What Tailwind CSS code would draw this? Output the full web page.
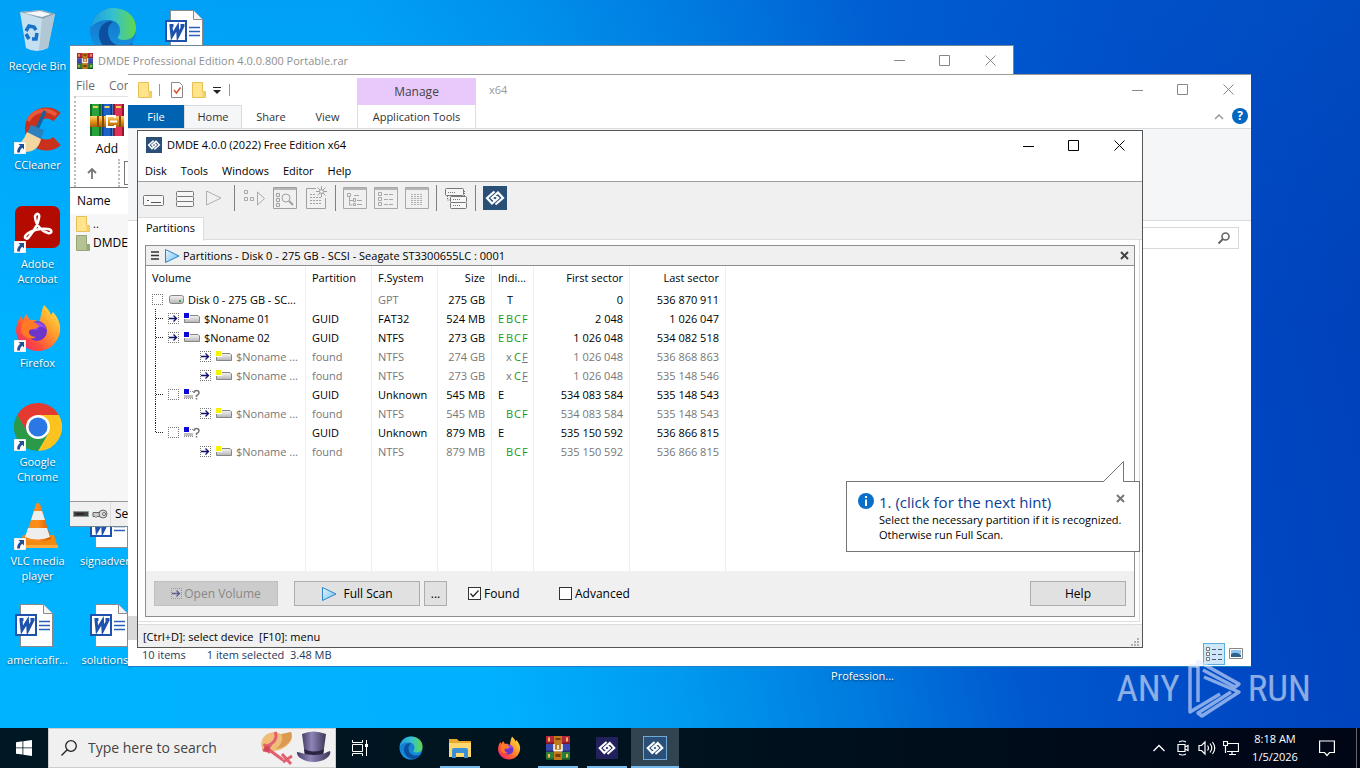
<!DOCTYPE html>
<html lang="en">
<head>
  <meta charset="UTF-8" />
  <title>DMDE 4.0.0 (2022) Free Edition x64</title>
  <meta name="viewport" content="width=device-width, initial-scale=1.0">
  <script src="https://cdn.jsdelivr.net/npm/@tailwindcss/browser@4"></script>
</head>
<body class="h-screen overflow-hidden font-['Open_Sans','Noto_Sans',sans-serif] text-[11px] leading-4 text-black">

<!-- shared icons -->
<svg class="absolute size-0" aria-hidden="true">
  <defs>
    <linearGradient id="edgeTop" x1="0" y1="0" x2="1" y2="0"><stop offset="0" stop-color="#1b9de2"/><stop offset=".5" stop-color="#35c1d0"/><stop offset="1" stop-color="#62d848"/></linearGradient>
    <linearGradient id="edgeBody" x1="0" y1="0" x2="0" y2="1"><stop offset="0" stop-color="#1470c4"/><stop offset="1" stop-color="#1595e4"/></linearGradient>
    <linearGradient id="fox" x1="1" y1="0" x2="0" y2="1"><stop offset="0" stop-color="#fff14a"/><stop offset=".4" stop-color="#ff9a2b"/><stop offset=".7" stop-color="#ff4b3c"/><stop offset="1" stop-color="#e3208a"/></linearGradient>
    <linearGradient id="play" x1="0" y1="0" x2="1" y2="1"><stop offset="0" stop-color="#e4f5ff"/><stop offset="1" stop-color="#6fc0f2"/></linearGradient>
    <linearGradient id="cone" x1="0" y1="0" x2="1" y2="0"><stop offset="0" stop-color="#f08a1c"/><stop offset=".5" stop-color="#ff8c1a"/><stop offset="1" stop-color="#d05a00"/></linearGradient>
    <linearGradient id="gold" x1="0" y1="0" x2="0" y2="1"><stop offset="0" stop-color="#ffd877"/><stop offset=".5" stop-color="#e39317"/><stop offset="1" stop-color="#a85f08"/></linearGradient>
    <linearGradient id="hat" x1="0" y1="0" x2="1" y2="0"><stop offset="0" stop-color="#453d63"/><stop offset=".4" stop-color="#8f84b8"/><stop offset="1" stop-color="#3f3757"/></linearGradient>
    <linearGradient id="metal" x1="0" y1="0" x2="0" y2="1"><stop offset="0" stop-color="#f6f6f6"/><stop offset="1" stop-color="#b4b4b4"/></linearGradient>
  </defs>
  <symbol id="shortcut" viewBox="0 0 12 12"><path fill="#fff" stroke="#bbb" stroke-width=".5" d="M0 0h12v12H0z"/><path fill="#234f93" d="M4.500 2H10v5.500L8.300 5.800C6.500 7 6 8.500 6 10.500H3.200C3 7.500 4 5.500 6.200 3.700z"/></symbol>
  <symbol id="word" viewBox="0 0 48 48">
    <path fill="#fff" stroke="#8a8a8a" d="M8.500 3.500h23l9 9v33h-32z"/><path fill="#f4f4f4" stroke="#8a8a8a" d="M31.500 3.500v9h9"/>
    <path stroke="#2b5fb8" stroke-width="1.500" d="M27 20.500h11M27 24.500h11M27 28.500h11"/>
    <path fill="#fff" stroke="#1f52ad" stroke-width="2" d="M4 14h20v20H4z"/>
    <path fill="none" stroke="#1f52ad" stroke-width="3" d="M7.500 18.500h4M9 19l1 10 5.500-9 .5 9L21 19M18.500 18.500h4"/>
  </symbol>
  <symbol id="edge" viewBox="0 0 48 48">
    <circle cx="24" cy="24" r="23" fill="url(#edgeBody)"/>
    <path fill="#0c4f9e" d="M21 14c-8 2-12 8-11 16 2 10 10 16 19 16 7-1 12-5 15-10-4 3-8 3-12 3-9-1-13-8-13-14 0-4 1-8 5-10z"/>
    <path fill="url(#edgeTop)" d="M1.500 21C3 9 13 1 24 1c14 0 23 9 23 20 0 8-5 12-12 12-4 0-7-1-6-3 1-2 2-3 2-7 0-6-5-10-12-10-8 0-14 3-17.500 8z"/>
  </symbol>
  <symbol id="firefox" viewBox="0 0 48 48">
    <path fill="url(#fox)" d="M30 1c3 3 6 6 7 10l2-3c6 7 8 13 7 20-2 11-11 19-22 19S3 39 2 27c0-6 2-11 5-15l2 4 3-6 4 6c4-1 7 0 9 3 2-6 2-12 5-18z"/>
    <circle cx="23" cy="27" r="10" fill="#6d35c9"/><path fill="#9a4ff0" d="M15 21c5-5 15-3 17 4-5-4-8-2-9 1-3 0-7-1-8-5z"/>
    <path fill="#ff7a24" d="M9 17c6-2 11 0 16 5-3 4-8 2-10 5-1 3 3 6 7 6-6 4-15 0-15-8z"/>
  </symbol>
  <symbol id="chrome" viewBox="0 0 48 48">
    <path fill="#e53a2f" d="M3.200 12a24 24 0 0 1 41.600 0H24L13.600 30z"/><path fill="#fcc31e" d="M44.800 12A24 24 0 0 1 24 48l10.400-18L24 12z"/><path fill="#2a9a48" d="M24 48A24 24 0 0 1 3.200 12L13.600 30 24 36l10.400-6z"/>
    <circle cx="24" cy="24" r="12" fill="#fff"/><circle cx="24" cy="24" r="9.500" fill="#2b78e4"/>
  </symbol>
  <symbol id="links" viewBox="0 0 24 24">
    <path fill="none" stroke="#fff" stroke-width="2.200" d="M11.500 5.500 4 12l5 5.500 6.200-5.500-2.700-2.500M12.500 18.500 20 12l-5-5.500L8.800 12l2.700 2.500"/>
  </symbol>
  <symbol id="dmde" viewBox="0 0 24 24"><path fill="#2a5078" d="M0 0h24v24H0z"/><use href="#links" width="24" height="24"/></symbol>
  <symbol id="folder" viewBox="0 0 14 16"><path fill="#ffe48c" stroke="#e6bf55" d="M.5.500h10v9h3v6H.5z"/><path fill="#f3d06b" d="M10.500 9.500h3v6h-3z"/></symbol>
  <symbol id="books" viewBox="0 0 34 34">
    <path fill="#27a23c" d="M0 1h11v32H0z"/><path fill="#1d62c9" d="M11.500 1h11v32h-11z"/><path fill="#dd3157" d="M23 1h11v32H23z"/>
    <path fill="#156b25" d="M0 1h2v32H0zM9 1h2v32H9z"/><path fill="#0e3b88" d="M11.500 1h2v32h-2zM20.500 1h2v32h-2z"/><path fill="#95152f" d="M23 1h2v32h-2zM32 1h2v32h-2z"/>
    <path fill="#f2d44c" d="M3 3h5v2H3zM14.500 3h5v2h-5zM26 3h5v2h-5z"/>
    <path fill="url(#gold)" d="M0 13h34v11H0z"/><path fill="#8c4a00" d="M7 13h2v11H7zM12 13h2v11h-2zM29 13h2v11h-2z"/><path fill="none" stroke="#fff" stroke-width="2" d="M25 15v-2h-8v11h8v-2M20 18.500h7"/>
  </symbol>
  <symbol id="rar" viewBox="0 0 24 24">
    <path fill="#b8243f" d="M0 0h24v8H0z"/><path fill="#3a4aae" d="M0 8h24v8H0z"/><path fill="#2c7f3a" d="M0 16h24v8H0z"/>
    <path fill="#000" opacity=".35" d="M0 6.500h24V8H0zM0 14.500h24V16H0zM0 22.500h24V24H0z"/><path fill="#eec24d" d="M2 1.500h2v4H2zM20 1.500h2v4h-2zM2 18h2v3.500H2zM20 18h2v3.500h-2z"/>
    <path fill="#c07a1b" d="M8 0h8v24H8z"/><path fill="#7a3d05" d="M9.500 2h5v2h-5zM9.500 18h5v3h-5z"/><path fill="none" stroke="#fff" stroke-width="1.500" d="M8 8v6.500h8V8M12 9v4"/>
  </symbol>
  <symbol id="drive" viewBox="0 0 16 11"><rect x=".5" y="1.500" width="14" height="8" rx="2" fill="url(#metal)" stroke="#858585"/><path fill="#2fae3a" d="M10 6h2v2h-2z"/></symbol>
  <symbol id="vol-blue" viewBox="0 0 16 11"><path fill="url(#metal)" stroke="#858585" d="M2 2.500h12l1.500 1.500v5.500h-15V4z"/><path fill="#fff" d="M0 0h6v6H0z"/><path fill="#0a08d8" d="M0 0h5v5H0z"/></symbol>
  <symbol id="vol-yellow" viewBox="0 0 16 11"><path fill="url(#metal)" stroke="#858585" d="M2 2.500h12l1.500 1.500v5.500h-15V4z"/><path fill="#fff" d="M0 0h6v6H0z"/><path fill="#f4f400" d="M0 0h5v5H0z"/></symbol>
  <symbol id="vol-unknown" viewBox="0 0 16 11"><path fill="#bdbdbd" d="M0 6h9v3H0z"/><path fill="#0a08d8" d="M0 0h5v5H0z"/><path stroke="#888" stroke-dasharray="1 1" d="M6 2.500h3M0 9.500h9"/><path fill="none" stroke="#777" stroke-width="1.500" d="M10 4q0-2.500 2.500-2.500T15 4q0 1.500-2.500 2.500V8M12.500 9v1.500"/></symbol>
  <symbol id="box" viewBox="0 0 11 11"><path fill="none" stroke="#777" stroke-dasharray="1 1" d="M0 .5h11M0 10.500h11M.5 2v7M10.500 2v7"/></symbol>
  <symbol id="open" viewBox="0 0 11 11"><path fill="none" stroke="#777" stroke-dasharray="1 1" d="M0 .5h11M0 10.500h11M.5 2v7M10.500 2v7"/><path fill="none" stroke="#13106b" stroke-width="1.300" d="M1 5.500h7.500M5.500 2.500l3 3-3 3"/></symbol>
  <symbol id="tree-mid" viewBox="0 0 16 19"><path fill="none" stroke="#222" stroke-dasharray="1 1" d="M3.500 0v19M4 9.500h8"/></symbol>
  <symbol id="tree-pass" viewBox="0 0 16 19"><path fill="none" stroke="#222" stroke-dasharray="1 1" d="M3.500 0v19"/></symbol>
  <symbol id="tree-end" viewBox="0 0 16 19"><path fill="none" stroke="#222" stroke-dasharray="1 1" d="M3.500 0v9.500M4 9.500h8"/></symbol>
  <symbol id="tri" viewBox="0 0 16 16"><path fill="url(#play)" stroke="#2f83c7" d="M1.500 1.500v13L15 8z"/></symbol>
</svg>

<div class="flex h-screen flex-col">
<main class="relative flex-1 overflow-hidden bg-[linear-gradient(180deg,rgba(0,110,220,.25)_0%,rgba(0,110,220,0)_45%),linear-gradient(78deg,#00b3ff_0%,#00b1ff_33%,#009bf0_45%,#0078dd_58%,#0058cf_68%,#0048c4_83%,#003fb6_100%)]">

  <!-- desktop icons -->
  <div class="grid grid-cols-[repeat(12,75px)] auto-rows-[99px] pt-[7px] text-center leading-[15px] text-white [text-shadow:0_1px_2px_rgba(0,0,0,.55)]">
    <a href="#" class="col-start-1 row-start-1 flex flex-col items-center gap-[3px]">
      <svg class="size-12" viewBox="0 0 48 48"><path fill="#d9e6ee" opacity=".9" d="m6 5 6 36q10 6 22 0l7-34-14-4z"/><path fill="#a9bcc8" opacity=".7" d="m28 13 13-6-7 34-9 2z"/><path fill="#8ca3b2" d="m6 5 21-2 14 4-12 5z"/><path fill="#f4f8fb" d="m10 6 16-2 11 3-9 3z"/><path fill="none" stroke="#1771c6" stroke-width="3.500" d="m12 24 3-5 5 1 2 3M23 26l-1 6h-4M15 32l-3-5"/></svg>
      <span class="whitespace-nowrap">Recycle Bin</span>
    </a>
    <a href="#" class="col-start-1 row-start-2 flex flex-col items-center gap-[3px]">
      <span class="relative"><svg class="size-12" viewBox="0 0 48 48"><path fill="none" stroke="#c8321c" stroke-width="11" d="M43 11A16 16 0 1 0 43 35"/><path fill="none" stroke="#e8583a" stroke-width="4" d="M42 9A18 18 0 0 0 14 15"/><path stroke="#185f9c" stroke-width="3.500" d="m31 5-8 18"/><path fill="#2c80bd" d="m17 19 13 5-3 9-14-6z"/><path fill="#f2d7a2" d="m13 26 14 7q-3 13-16 13-6-1-11-5 9-4 13-15z"/></svg><svg class="absolute bottom-0 left-0 size-3"><use href="#shortcut"/></svg></span>
      <span>CCleaner</span>
    </a>
    <a href="#" class="col-start-1 row-start-3 flex flex-col items-center gap-[3px]">
      <span class="relative"><svg class="size-12" viewBox="0 0 48 48"><rect x="1" y="1" width="45" height="42" rx="7" fill="#b30b00"/><path fill="none" stroke="#fff" stroke-width="2.500" stroke-linejoin="round" d="M21 11c2-4 5-2 4 2-1 7-6 14-10 19-2 3-6 1-3-2 5-5 15-7 22-6 5 1 4 5 0 4-7-2-13-9-13-17z"/></svg><svg class="absolute bottom-0 left-0 size-3"><use href="#shortcut"/></svg></span>
      <span>Adobe<br>Acrobat</span>
    </a>
    <a href="#" class="col-start-1 row-start-4 flex flex-col items-center gap-[3px]">
      <span class="relative"><svg class="size-12"><use href="#firefox"/></svg><svg class="absolute bottom-0 left-0 size-3"><use href="#shortcut"/></svg></span>
      <span>Firefox</span>
    </a>
    <a href="#" class="col-start-1 row-start-5 flex flex-col items-center gap-[3px]">
      <span class="relative"><svg class="size-12"><use href="#chrome"/></svg><svg class="absolute bottom-0 left-0 size-3"><use href="#shortcut"/></svg></span>
      <span>Google<br>Chrome</span>
    </a>
    <a href="#" class="col-start-1 row-start-6 flex flex-col items-center gap-[3px]">
      <span class="relative"><svg class="size-12" viewBox="0 0 48 48"><path fill="#f28a12" d="M9 33h31l4 13H5z"/><path fill="#ffab3d" d="M5 43h39v3H5z"/><path fill="url(#cone)" d="M22 2q2-2 4 0l11 35q-13 6-26 0z"/><path fill="#eee" d="m20 9h8l3 9H17zM14 26h19l3 9q-12 5-25 0z"/></svg><svg class="absolute bottom-0 left-0 size-3"><use href="#shortcut"/></svg></span>
      <span class="whitespace-nowrap">VLC media<br>player</span>
    </a>
    <a href="#" class="col-start-1 row-start-7 flex flex-col items-center gap-[3px]">
      <svg class="mr-1 size-12"><use href="#word"/></svg>
      <span>americafir...</span>
    </a>
    <a href="#" class="col-start-2 row-start-1 flex flex-col items-center gap-[3px]"><svg class="size-12"><use href="#edge"/></svg></a>
    <a href="#" class="col-start-2 row-start-6 flex flex-col items-center gap-[3px]">
      <svg class="mr-1 size-12"><use href="#word"/></svg>
      <span>signadverti...</span>
    </a>
    <a href="#" class="col-start-2 row-start-7 flex flex-col items-center gap-[3px]">
      <svg class="mr-1 size-12"><use href="#word"/></svg>
      <span>solutionsp...</span>
    </a>
    <a href="#" class="col-start-3 row-start-1 flex flex-col items-center gap-[3px]"><svg class="mr-1 size-12"><use href="#word"/></svg></a>
    <a href="#" class="col-start-12 row-start-7 self-end pb-[17px]">Profession...</a>
  </div>

  <!-- WinRAR -->
  <section class="absolute top-[45px] left-[69px] flex h-[482px] w-[945px] flex-col border border-[#6f8796] bg-white">
    <header class="flex h-[29px] items-center gap-[5px] pl-[7px] text-[#8f8f8f]">
      <svg class="size-4"><use href="#rar"/></svg>
      <span>DMDE Professional Edition 4.0.0.800 Portable.rar</span>
      <div class="ml-auto flex">
        <button aria-label="Minimize" class="flex w-[46px] justify-center"><svg class="size-[11px]" viewBox="0 0 11 11"><path stroke="#888" d="M0 5.500h11"/></svg></button>
        <button aria-label="Maximize" class="flex w-[45px] justify-center"><svg class="size-[11px]" viewBox="0 0 11 11"><path fill="none" stroke="#888" d="M.5.500h10v10H.5z"/></svg></button>
        <button aria-label="Close" class="flex w-[46px] justify-center"><svg class="size-[11px]" viewBox="0 0 11 11"><path stroke="#888" d="m.5.500 10 10m0-10-10 10"/></svg></button>
      </div>
    </header>
    <nav class="flex h-[21px] items-center gap-[14px] pl-[6px] text-xs text-[#6d6d6d]"><button>File</button><button>Commands</button></nav>
    <div class="ml-1 flex h-[63px] border-t border-l-2 border-t-[#e4e4e4] border-l-[#bbb] [border-left-style:dotted]">
      <button class="ml-[14px] flex flex-col items-center gap-1 pt-[6px] text-xs"><svg class="size-[34px]"><use href="#books"/></svg><span>Add</span></button>
    </div>
    <div class="ml-1 flex h-[28px] items-center border-l-2 border-dotted border-[#bbb]">
      <button aria-label="Up" class="flex h-full w-[44px] items-center border-r-2 border-dotted border-[#bbb] pl-[10px]"><svg class="size-3" viewBox="0 0 12 12"><path fill="none" stroke="#777" stroke-width="1.800" d="M6 12V2M2 6l4-4 4 4"/></svg></button>
      <div class="ml-1 h-6 flex-1 border border-[#777]"></div>
    </div>
    <div class="flex-1 border-t border-[#777] bg-[#f6f6f6]">
      <div class="flex h-[26px] items-center bg-white pl-[7px] text-xs">Name</div>
      <div class="flex h-[19px] items-center gap-[3px] pl-[6px]"><svg class="h-4 w-[14px]"><use href="#folder"/></svg>..</div>
      <div class="flex h-[19px] items-center gap-[3px] pl-[6px] text-xs"><svg class="h-4 w-[14px]" viewBox="0 0 14 16"><path fill="#b4c294" stroke="#95a577" d="M.5.500h10v9h3v6H.5z"/><path fill="#93a873" d="M10.500 9.500h3v6h-3z"/></svg>DMDE</div>
    </div>
    <footer class="flex h-[25px] items-center border-t border-[#999] bg-[#f0f0f0] pl-[3px] text-xs">
      <svg class="h-3 w-4" viewBox="0 0 16 12"><path fill="#444" stroke="#8a9a9a" d="M.5 3.500h15v5H.5z"/><path stroke="#111" d="M3 6h8"/></svg>
      <svg class="ml-[3px] h-3 w-4" viewBox="0 0 16 12"><path fill="#ccc" stroke="#666" d="M1 4.500h8v4H5l-1 1-1-1H1z"/><circle cx="11" cy="6" r="4" fill="#ddd" stroke="#666"/><circle cx="12" cy="6" r="1.500" fill="#fff" stroke="#666"/></svg>
      <span class="ml-[2px] h-full w-px bg-[#dcdcdc]"></span>
      <span class="ml-1">Selected</span>
    </footer>
  </section>

  <!-- File Explorer -->
  <section class="absolute top-[74px] left-[128px] flex h-[593px] w-[1123px] flex-col border-t border-b border-t-[#9a9a9a] border-b-[#1b7fc4] bg-white">
    <header class="flex h-[30px] items-center text-[#777]">
      <svg class="ml-[10px] h-4 w-[14px]"><use href="#folder"/></svg>
      <span class="ml-[7px] h-3 w-px bg-[#999]"></span>
      <svg class="ml-[11px] h-4 w-3" viewBox="0 0 12 16"><path fill="#fff" stroke="#888" d="M.5.500h8l3 3v12H.5z"/><path fill="none" stroke="#d9532c" stroke-width="1.500" d="m3 8 2.500 3L9.500 5.500"/></svg>
      <svg class="ml-[9px] h-4 w-[14px]"><use href="#folder"/></svg>
      <svg class="ml-[7px] h-2 w-2" viewBox="0 0 8 8"><path stroke="#222" d="M0 1.500h8"/><path fill="#222" d="M0 4h8L4 8z"/></svg>
      <span class="ml-2 h-3 w-px bg-[#999]"></span>
      <span class="mt-[3px] ml-[127px] flex h-[27px] w-[119px] items-center justify-center bg-[#e9c9fb] text-xs text-[#444]">Manage</span>
      <span class="ml-[13px] text-[#999]">x64</span>
      <div class="mb-[2px] ml-auto flex">
        <button aria-label="Minimize" class="flex w-[46px] justify-center"><svg class="size-[11px]" viewBox="0 0 11 11"><path stroke="#888" d="M0 6.500h11"/></svg></button>
        <button aria-label="Maximize" class="flex w-[45px] justify-center"><svg class="size-[11px]" viewBox="0 0 11 11"><path fill="none" stroke="#888" d="M.5.500h10v10H.5z"/></svg></button>
        <button aria-label="Close" class="flex w-[46px] justify-center"><svg class="size-[11px]" viewBox="0 0 11 11"><path stroke="#888" d="m.5.500 10 10m0-10-10 10"/></svg></button>
      </div>
    </header>
    <nav class="flex h-[24px] border-b border-[#dadbdc] text-[#333]">
      <button class="w-14 bg-[#0063b1] text-white">File</button>
      <button class="w-[58px] border-x border-t border-[#dadbdc] bg-[#f5f6f7]">Home</button>
      <button class="w-[58px]">Share</button>
      <button class="w-[55px]">View</button>
      <button class="ml-[2px] w-[119px] border-x border-[#e6d6ef]">Application Tools</button>
      <div class="ml-auto flex items-center gap-2 pr-[3px]">
        <svg class="h-2 w-[10px]" viewBox="0 0 10 8"><path fill="none" stroke="#999" stroke-width="1.500" d="m1 6 4-4 4 4"/></svg>
        <button aria-label="Help" class="mb-[2px] size-4 rounded-full bg-[#0067c0] text-xs leading-4 font-bold text-white">?</button>
      </div>
    </nav>
    <div class="h-[92px] border-b border-[#dadbdc] bg-[#f5f6f7]"></div>
    <div class="flex h-[34px] items-center justify-end pr-3">
      <label class="flex h-[22px] w-[200px] items-center border border-[#d9d9d9] pr-2">
        <input type="text" aria-label="Search x64" class="min-w-0 flex-1 outline-none">
        <svg class="size-3" viewBox="0 0 12 12"><circle cx="7.500" cy="4.500" r="3.500" fill="none" stroke="#666" stroke-width="1.600"/><path stroke="#666" stroke-width="2" d="M5 7 .5 11.500"/></svg>
      </label>
    </div>
    <div class="flex flex-1 flex-col justify-end pb-[2px]"><div class="h-[24px] w-40 bg-[#d9d9d9]"></div></div>
    <footer class="flex h-[24px] items-center gap-[21px] pl-[14px] text-[#1e395b]">
      <span class="pt-[2px]">10 items</span><span class="pt-[2px] whitespace-pre">1 item selected  3.48 MB</span>
      <div class="ml-auto flex items-center self-stretch pr-2">
        <button aria-label="Details" class="flex h-[22px] w-[22px] items-center justify-center border border-[#5aaede] bg-[#cde9f7]"><svg class="h-[14px] w-4" viewBox="0 0 16 14"><path fill="#fff" stroke="#777" d="M.5.500h3v3h-3zM.5 5.500h3v3h-3zM.5 10.500h3v3h-3z"/><path stroke="#557" stroke-dasharray="4 2" d="M6 2.500h10M6 7.500h10M6 12.500h10"/></svg></button>
        <button aria-label="Thumbnails" class="ml-1"><svg class="h-3 w-[14px]" viewBox="0 0 14 12"><path fill="#fff" stroke="#888" d="M.5.500h13v10H.5z"/><path fill="#8ec5ef" d="M2 2h10v4H2z"/><path fill="#30608d" d="M2 6q5-3 10 1v2H2z"/></svg></button>
      </div>
    </footer>
  </section>

  <!-- DMDE -->
  <section class="absolute top-[130px] left-[137px] flex h-[518px] w-[1006px] flex-col border border-[#555] bg-white">
    <header class="flex h-[30px] items-center gap-[5px] pb-[2px] pl-2">
      <svg class="size-4"><use href="#dmde"/></svg>
      <h1>DMDE 4.0.0 (2022) Free Edition x64</h1>
      <div class="ml-auto flex">
        <button aria-label="Minimize" class="flex w-[46px] justify-center"><svg class="size-[11px]" viewBox="0 0 11 11"><path stroke="#000" d="M0 6.500h11"/></svg></button>
        <button aria-label="Maximize" class="flex w-[45px] justify-center"><svg class="size-[11px]" viewBox="0 0 11 11"><path fill="none" stroke="#000" d="M.5.500h10v10H.5z"/></svg></button>
        <button aria-label="Close" class="flex w-[46px] justify-center"><svg class="size-[11px]" viewBox="0 0 11 11"><path stroke="#000" d="m.5.500 10 10m0-10-10 10"/></svg></button>
      </div>
    </header>
    <nav class="flex h-[21px] items-center gap-[14px] border-b border-[#a0a0a0] pl-[7px]">
      <button>Disk</button><button>Tools</button><button>Windows</button><button>Editor</button><button>Help</button>
    </nav>

    <div class="flex h-[35px] items-center bg-[#f0f0f0] pb-[3px] [&>button]:flex [&>button]:w-[31px] [&>button]:justify-center">
      <button aria-label="Select device"><svg class="h-6 w-[22px]" viewBox="0 0 22 24"><rect x=".5" y="9.500" width="20" height="10" rx="1" fill="#f8f8f8" stroke="#777"/><path stroke="#555" d="M4 14.500h2M8 16.500h10"/></svg></button>
      <button aria-label="Volumes"><svg class="h-6 w-5" viewBox="0 0 20 24"><g fill="#f6f6f6" stroke="#777"><rect x="1.500" y="5.500" width="17" height="5" rx="1"/><rect x="1.500" y="10.500" width="17" height="5" rx="1"/><rect x="1.500" y="15.500" width="17" height="5" rx="1"/></g></svg></button>
      <button aria-label="Scan" class="pr-1"><svg class="h-6 w-5" viewBox="0 0 20 24"><path fill="none" stroke="#b0b0b0" d="M2.500 5v14L17 12z"/></svg></button>
      <span class="flex w-[7px] justify-center"><span class="h-[26px] w-px bg-[#808080]"></span></span>
      <button aria-label="Open"><svg class="h-6 w-[22px]" viewBox="0 0 22 24"><path fill="none" stroke="#a8a8a8" d="M1.500 4.500h3v3h-3zM1.500 11.500h3v3h-3zM7.500 11.500h3v3h-3zM14.500 6v13l7-6.500z"/></svg></button>
      <button aria-label="Find"><svg class="size-6" viewBox="0 0 24 24"><path fill="none" stroke="#a0a0a0" d="M.5 1.500h23v21H.5zM3.500 7.500h3v3h-3zM3.500 12.500h3v3h-3zM3.500 17.500h3v3h-3z"/><path stroke="#b5b5b5" stroke-width="2" d="M1 3h22"/><circle cx="13" cy="12" r="4" fill="none" stroke="#a0a0a0"/><path stroke="#a0a0a0" stroke-width="2" d="m16 15 4 4"/></svg></button>
      <button aria-label="New report"><svg class="size-6" viewBox="0 0 24 24"><path fill="none" stroke="#a0a0a0" d="M12 2.500H2.500v20h19V12"/><path stroke="#a0a0a0" stroke-dasharray="2 1" d="M6 11.500h11M6 14.500h11M6 17.500h11M6 8.500h6"/><path stroke="#a0a0a0" d="M17.500 0v11M12 5.500h11M13.500 1.500l8 8m0-8-8 8"/><circle cx="17.500" cy="5.500" r="2" fill="#f0f0f0" stroke="#a0a0a0"/></svg></button>
      <span class="flex w-2 justify-center"><span class="h-[26px] w-px bg-[#808080]"></span></span>
      <button aria-label="Tree view"><svg class="size-6" viewBox="0 0 24 24"><path fill="none" stroke="#a8a8a8" d="M.5 1.500h23v21H.5z"/><path stroke="#b5b5b5" stroke-width="2" d="M1 3h22"/><path fill="none" stroke="#a8a8a8" d="M4.500 7.500h3v3h-3zM6.500 11v8h3M7 14.500h3M10.500 12.500h2v3h-2zM10.500 17.500h2v2h-2zM11 9.500h5M14 14.500h5M14 18.500h5"/></svg></button>
      <button aria-label="List view"><svg class="size-6" viewBox="0 0 24 24"><path fill="none" stroke="#a8a8a8" d="M.5 1.500h23v21H.5z"/><path stroke="#b5b5b5" stroke-width="2" d="M1 3h22"/><path fill="none" stroke="#a8a8a8" d="M4.500 6.500h3v3h-3zM4.500 11.500h3v3h-3zM4.500 16.500h3v3h-3zM10 8.500h4M15 8.500h4M10 13.500h4M15 13.500h4M10 18.500h4M15 18.500h4"/></svg></button>
      <button aria-label="Hex view"><svg class="size-6" viewBox="0 0 24 24"><path fill="none" stroke="#a8a8a8" d="M.5 1.500h23v21H.5z"/><path stroke="#b5b5b5" stroke-width="2" d="M1 3h22"/><path stroke="#b0b0b0" stroke-dasharray="2 1" d="M6 8.500h12M6 10.500h12M6 12.500h12M6 14.500h12M6 16.500h12M6 18.500h12"/></svg></button>
      <span class="flex w-2 justify-center"><span class="h-[26px] w-px bg-[#808080]"></span></span>
      <button aria-label="RAID"><svg class="size-6" viewBox="0 0 24 24"><g fill="#f6f6f6" stroke="#777"><rect x="1.500" y="2.500" width="18" height="7" rx="1"/><rect x="6.500" y="10.500" width="16" height="6" rx="1"/><rect x="6.500" y="16.500" width="16" height="6" rx="1"/></g><path fill="none" stroke="#777" stroke-dasharray="1 1" d="M4 6.500h8M9 13.500h8M9 19.500h8M20.500 5v5M3.500 10v4h3"/></svg></button>
      <span class="flex w-2 justify-center"><span class="h-[26px] w-px bg-[#808080]"></span></span>
      <button aria-label="About"><svg class="size-6"><use href="#dmde"/></svg></button>
    </div>

    <div class="flex h-[23px] bg-[#f0f0f0]">
      <button class="relative z-10 h-[24px] w-[66px] border-t border-r border-[#dcdcdc] bg-white pb-[3px]">Partitions</button>
      <span class="flex-1 border-b border-[#dcdcdc]"></span>
    </div>

    <div class="mr-[2px] flex min-h-0 flex-1 flex-col border-r border-b border-[#dcdcdc] px-[7px] pt-[5px] pb-[4px]">
      <div class="mr-[-3px] flex flex-1 flex-col border border-[#8e8e8e]">
        <div class="flex h-[20px] items-center border-b border-[#8e8e8e] bg-[#f0f0f0] px-[5px]">
          <svg class="h-[9px] w-2" viewBox="0 0 8 9"><path stroke="#333" stroke-width="1.500" d="M0 1h8M0 4.500h8M0 8h8"/></svg>
          <svg class="ml-[5px] size-4"><use href="#tri"/></svg>
          <h2 class="ml-[3px]">Partitions - Disk 0 - 275 GB - SCSI - Seagate ST3300655LC : 0001</h2>
          <button aria-label="Close panel" class="ml-auto"><svg class="size-[9px]" viewBox="0 0 9 9"><path stroke="#444" stroke-width="2" d="m1 1 7 7m0-7L1 8"/></svg></button>
        </div>
        <div class="min-h-0 flex-1 overflow-hidden">
          <table class="h-full w-[580px] table-fixed border-separate border-spacing-0 whitespace-nowrap [&_td]:border-r [&_td]:border-[#efefef] [&_td]:px-[6px] [&_td]:py-0 [&_th]:border-r [&_th]:border-[#efefef] [&_th]:px-[6px] [&_th]:py-0 [&_th]:font-normal">
            <colgroup><col class="w-[160px]"><col class="w-[66px]"><col class="w-[66px]"><col class="w-[54px]"><col class="w-[42px]"><col class="w-[96px]"><col class="w-[96px]"></colgroup>
            <thead>
              <tr class="h-6 text-left"><th>Volume</th><th>Partition</th><th>F.System</th><th class="text-right">Size</th><th>Indi...</th><th class="text-right">First sector</th><th class="text-right">Last sector</th></tr>
            </thead>
            <tbody>
              <tr class="h-[19px]"><td><div class="flex items-center"><svg class="mr-[6px] size-[11px]"><use href="#box"/></svg><svg class="mr-[3px] h-[11px] w-4"><use href="#drive"/></svg>Disk 0 - 275 GB - SC...</div></td><td></td><td class="text-[#777]">GPT</td><td class="text-right">275 GB</td><td><div class="grid grid-cols-[repeat(4,8px)]"><span class="col-start-2 pl-px">T</span></div></td><td class="text-right">0</td><td class="text-right">536 870 911</td></tr>
              <tr class="h-[19px]"><td><div class="flex items-center"><svg class="h-[19px] w-4"><use href="#tree-mid"/></svg><svg class="mr-[5px] size-[11px]"><use href="#open"/></svg><svg class="mr-1 h-[11px] w-4"><use href="#vol-blue"/></svg>$Noname 01</div></td><td>GUID</td><td>FAT32</td><td class="text-right">524 MB</td><td><div class="grid grid-cols-[repeat(4,8px)] text-[#149a14]"><span>E</span><span>B</span><span>C</span><span>F</span></div></td><td class="text-right">2 048</td><td class="text-right">1 026 047</td></tr>
              <tr class="h-[19px]"><td><div class="flex items-center"><svg class="h-[19px] w-4"><use href="#tree-mid"/></svg><svg class="mr-[5px] size-[11px]"><use href="#open"/></svg><svg class="mr-1 h-[11px] w-4"><use href="#vol-blue"/></svg>$Noname 02</div></td><td>GUID</td><td>NTFS</td><td class="text-right">273 GB</td><td><div class="grid grid-cols-[repeat(4,8px)] text-[#149a14]"><span>E</span><span>B</span><span>C</span><span>F</span></div></td><td class="text-right">1 026 048</td><td class="text-right">534 082 518</td></tr>
              <tr class="h-[19px] text-[#777]"><td><div class="flex items-center"><svg class="mr-8 h-[19px] w-4"><use href="#tree-pass"/></svg><svg class="mr-[5px] size-[11px]"><use href="#open"/></svg><svg class="mr-1 h-[11px] w-4"><use href="#vol-yellow"/></svg>$Noname ...</div></td><td>found</td><td>NTFS</td><td class="text-right">274 GB</td><td><div class="grid grid-cols-[repeat(4,8px)]"><span class="col-start-2">x</span><span class="text-[#149a14]">C</span><span class="underline">F</span></div></td><td class="text-right">1 026 048</td><td class="text-right">536 868 863</td></tr>
              <tr class="h-[19px] text-[#777]"><td><div class="flex items-center"><svg class="mr-8 h-[19px] w-4"><use href="#tree-pass"/></svg><svg class="mr-[5px] size-[11px]"><use href="#open"/></svg><svg class="mr-1 h-[11px] w-4"><use href="#vol-yellow"/></svg>$Noname ...</div></td><td>found</td><td>NTFS</td><td class="text-right">273 GB</td><td><div class="grid grid-cols-[repeat(4,8px)]"><span class="col-start-2">x</span><span class="text-[#149a14]">C</span><span class="underline">F</span></div></td><td class="text-right">1 026 048</td><td class="text-right">535 148 546</td></tr>
              <tr class="h-[19px]"><td><div class="flex items-center"><svg class="h-[19px] w-4"><use href="#tree-mid"/></svg><svg class="mr-[5px] size-[11px]"><use href="#box"/></svg><svg class="h-[11px] w-4"><use href="#vol-unknown"/></svg></div></td><td>GUID</td><td>Unknown</td><td class="text-right">545 MB</td><td>E</td><td class="text-right">534 083 584</td><td class="text-right">535 148 543</td></tr>
              <tr class="h-[19px] text-[#777]"><td><div class="flex items-center"><svg class="mr-8 h-[19px] w-4"><use href="#tree-pass"/></svg><svg class="mr-[5px] size-[11px]"><use href="#open"/></svg><svg class="mr-1 h-[11px] w-4"><use href="#vol-yellow"/></svg>$Noname ...</div></td><td>found</td><td>NTFS</td><td class="text-right">545 MB</td><td><div class="grid grid-cols-[repeat(4,8px)] text-[#149a14]"><span class="col-start-2">B</span><span>C</span><span>F</span></div></td><td class="text-right">534 083 584</td><td class="text-right">535 148 543</td></tr>
              <tr class="h-[19px]"><td><div class="flex items-center"><svg class="h-[19px] w-4"><use href="#tree-end"/></svg><svg class="mr-[5px] size-[11px]"><use href="#box"/></svg><svg class="h-[11px] w-4"><use href="#vol-unknown"/></svg></div></td><td>GUID</td><td>Unknown</td><td class="text-right">879 MB</td><td>E</td><td class="text-right">535 150 592</td><td class="text-right">536 866 815</td></tr>
              <tr class="h-[19px] text-[#777]"><td><div class="flex items-center pl-12"><svg class="mr-[5px] size-[11px]"><use href="#open"/></svg><svg class="mr-1 h-[11px] w-4"><use href="#vol-yellow"/></svg>$Noname ...</div></td><td>found</td><td>NTFS</td><td class="text-right">879 MB</td><td><div class="grid grid-cols-[repeat(4,8px)] text-[#149a14]"><span class="col-start-2">B</span><span>C</span><span>F</span></div></td><td class="text-right">535 150 592</td><td class="text-right">536 866 815</td></tr>
              <tr><td></td><td></td><td></td><td></td><td></td><td></td><td></td></tr>
            </tbody>
          </table>
        </div>
        <div class="flex h-[45px] items-center bg-[#f0f0f0] px-2 text-xs">
          <button disabled class="flex h-[25px] w-[124px] items-center justify-center border border-[#bfbfbf] bg-[#cccccc] text-[#888]"><svg class="mr-[2px] size-[11px] opacity-60"><use href="#open"/></svg>Open Volume</button>
          <button class="ml-4 flex h-[25px] w-[126px] items-center justify-center gap-[6px] border border-[#adadad] bg-[#e1e1e1]"><svg class="size-4"><use href="#tri"/></svg>Full Scan</button>
          <button class="ml-1 h-[25px] w-[23px] border border-[#adadad] bg-[#e1e1e1]">...</button>
          <label class="ml-[21px] flex w-[91px] items-center gap-[3px]"><span class="relative flex"><input type="checkbox" checked class="peer size-[13px] appearance-none border border-[#333] bg-white"><svg class="absolute inset-0 hidden size-[13px] peer-checked:block" viewBox="0 0 13 13"><path fill="none" stroke="#222" stroke-width="1.200" d="m2.500 6.500 2.500 3 5.500-6"/></svg></span>Found</label>
          <label class="flex items-center gap-[3px]"><input type="checkbox" class="size-[13px] appearance-none border border-[#333] bg-white">Advanced</label>
          <button class="ml-auto h-[25px] w-24 border border-[#adadad] bg-[#e1e1e1]">Help</button>
        </div>
      </div>
    </div>

    <footer class="mt-[2px] flex h-[23px] items-center justify-between border-t border-[#dcdcdc] bg-[#f0f0f0] pt-[2px] pl-[5px]">
      <span class="whitespace-pre">[Ctrl+D]: select device  [F10]: menu</span>
      <svg class="mr-[2px] size-[9px] self-end" viewBox="0 0 9 9"><path fill="#b0b0b0" d="M6 0h2v2H6zM6 3h2v2H6zM6 6h2v2H6zM3 3h2v2H3zM3 6h2v2H3zM0 6h2v2H0z"/></svg>
    </footer>

    <!-- hint balloon -->
    <aside class="absolute right-[2px] bottom-[95px] flex h-[71px] w-[294px] gap-[5px] border border-[#767676] bg-white pt-[10px] pl-[11px]">
      <svg class="absolute -top-[21px] right-[14px] h-[22px] w-[22px]" viewBox="0 0 22 22"><path fill="#fff" stroke="#767676" d="M.5 20.500 20.500.500v20"/><path fill="#fff" d="M1 20h19v2H1z"/></svg>
      <svg class="mt-px size-4 shrink-0" viewBox="0 0 16 16"><circle cx="8" cy="8" r="8" fill="#0a6fc9"/><path fill="#fff" d="M7 3h2v2H7zM7 6.500h2V13H7z"/></svg>
      <div>
        <h3 class="text-[15px] leading-5 text-[#0b3e97]">1. (click for the next hint)</h3>
        <p class="leading-[15px] whitespace-nowrap">Select the necessary partition if it is recognized.<br>Otherwise run Full Scan.</p>
      </div>
      <button aria-label="Close hint" class="absolute top-3 right-[14px]"><svg class="size-[9px]" viewBox="0 0 9 9"><path stroke="#777" stroke-width="2" d="m1 1 7 7m0-7L1 8"/></svg></button>
    </aside>
  </section>

  <!-- watermark -->
  <div class="pointer-events-none absolute right-[49px] bottom-[8px] flex items-center gap-[6px] font-['Liberation_Sans_Narrow','Roboto_Condensed','Liberation_Sans',sans-serif] text-[37px] leading-[62px] text-white/55">
    <span>ANY</span>
    <svg class="h-[62px] w-[56px]" viewBox="0 0 56 62"><g fill="none" stroke="#dfeaff" stroke-opacity=".6" stroke-width="3.500" stroke-linejoin="round"><path d="M12 8H4v46l30-18"/><path d="M12 44V3l41 23-4 3L17 12"/><path d="M18 19l35 15-37 24-4-3 33-21"/></g></svg>
    <span>RUN</span>
  </div>
</main>

<!-- taskbar -->
<footer class="flex h-10 bg-linear-to-r from-[#001823] via-[#00131f] to-[#000616] text-white">
  <button aria-label="Start" class="flex w-12 items-center justify-center"><svg class="size-4" viewBox="0 0 16 16"><path fill="#fff" d="M0 2.200 6.500 1.300v6.200H0zM7.300 1.200 16 0v7.500H7.300zM0 8.300h6.500v6.300L0 13.700zM7.300 8.300H16V16l-8.700-1.200z"/></svg></button>
  <label class="flex w-[288px] items-center border border-[#ccc] bg-[#f0f0f0] pl-3">
    <svg class="size-4" viewBox="0 0 16 16"><circle cx="10" cy="6" r="5.300" fill="none" stroke="#222" stroke-width="1.300"/><path stroke="#222" stroke-width="1.300" d="M6.200 9.800.500 15.500"/></svg>
    <input type="text" aria-label="Search" placeholder="Type here to search" class="ml-[11px] w-0 flex-1 text-sm outline-none placeholder:text-[#444]">
    <svg class="mr-1 h-9 w-[72px]" viewBox="0 0 72 36"><path fill="#f0bd78" d="M3 10C6 2 18 0 23 5l9-3c4 7-3 15-12 18L8 23C3 21 1 15 3 10z"/><path fill="#dc9a51" d="M22 4c3 5 0 12-6 15l6-1c9-4 12-10 10-16z"/><path fill="none" stroke="#e25f70" stroke-width="3" d="M16 2c3 6-1 12-9 14M5 14l6 9M12 15l-8 6M9 19l15 11M23 24l9 10M33 26l-9 6"/><circle cx="8" cy="19" r="3" fill="#d44458"/><path fill="url(#hat)" d="M43 4q11-5 24 0l-3 22H46z"/><path fill="#2c2542" d="M45 19q10 5 20 0l-1 6H46z"/><path fill="url(#hat)" d="M38 22c4 0 7 3 17 3s12-3 16-4c2 5-6 11-16 11s-18-5-17-10z"/></svg>
  </label>
  <button aria-label="Task view" class="flex w-12 items-center justify-center"><svg class="size-4" viewBox="0 0 16 16"><path fill="none" stroke="#fff" d="M.5 0v2.500h10V0M.5 4.500h10v7H.5zM.5 16v-2.500h10V16M14.500 0v16"/><path fill="#fff" d="M13 4h3v3h-3z"/></svg></button>
  <button aria-label="Edge" class="ml-[2px] flex w-[49px] items-center justify-center"><svg class="size-6"><use href="#edge"/></svg></button>
  <button aria-label="File Explorer" class="relative flex w-[49px] items-center justify-center"><svg class="size-6" viewBox="0 0 24 24"><path fill="#e9a92a" d="M1 3h8l2 2h12v5H1z"/><path fill="#ffd970" d="M1 7h22v14H1z"/><path fill="#3b8fd4" d="M4 14q0-2 2-2h12q2 0 2 2v8h-4v-5H8v5H4z"/></svg><span class="absolute bottom-0 h-[2px] w-10 bg-[#76b9ed]"></span></button>
  <button aria-label="Firefox" class="flex w-[49px] items-center justify-center"><svg class="size-6"><use href="#firefox"/></svg></button>
  <button aria-label="WinRAR" class="relative flex w-[49px] items-center justify-center"><svg class="size-6"><use href="#rar"/></svg><span class="absolute bottom-0 h-[2px] w-10 bg-[#76b9ed]"></span></button>
  <button aria-label="DMDE" class="relative flex w-[49px] items-center justify-center"><svg class="size-[22px] bg-[#22215c]"><use href="#links"/></svg><span class="absolute bottom-0 h-[2px] w-10 bg-[#76b9ed]"></span></button>
  <button aria-label="DMDE" class="relative flex w-12 items-center justify-center bg-[#304551]"><svg class="size-[22px] outline outline-[#6fa9d8]"><use href="#dmde"/></svg><span class="absolute bottom-0 h-[2px] w-full bg-[#76b9ed]"></span></button>
  <div class="ml-auto flex items-center">
    <button aria-label="Hidden icons" class="flex w-6 justify-center"><svg class="h-2 w-3" viewBox="0 0 12 8"><path fill="none" stroke="#fff" stroke-width="1.300" d="m.5 7 5.500-5.500L11.500 7"/></svg></button>
    <button aria-label="Meet now" class="flex w-6 justify-center"><svg class="size-4" viewBox="0 0 16 16"><path fill="none" stroke="#fff" stroke-width="1.200" d="M3 4.500h7v7H3zM10 7l3-1.500v5L10 9M4 2q3.500-2 7 0M4 14q3.500 2 7 0"/></svg></button>
    <button aria-label="Volume" class="flex w-6 justify-center"><svg class="h-4 w-[18px]" viewBox="0 0 18 16"><path fill="none" stroke="#fff" stroke-width="1.200" d="M1 5.500h2.500L7 2v12l-3.500-3.500H1zM9.500 5.500q2 2.500 0 5M12 3.500q3.500 4.500 0 9M14.500 2q4.500 6 0 12"/></svg></button>
    <button aria-label="Network" class="flex w-6 justify-center"><svg class="size-4" viewBox="0 0 16 16"><path fill="none" stroke="#fff" stroke-width="1.200" d="M5 3.500h10.500v8H4M9 11.500V15M6 14.500h7M.5 1.500h4v4h-4zM2.500 6v7"/></svg></button>
    <div class="w-16 text-center leading-[18px]">8:18 AM<br>1/5/2026</div>
    <button aria-label="Notifications" class="flex w-10 justify-center"><svg class="h-[17px] w-4" viewBox="0 0 16 17"><path fill="none" stroke="#fff" stroke-width="1.200" d="M.6 1h14.800v11.500h-4.900L8 15.500l-2.500-3H.6z"/></svg></button>
    <span class="ml-[9px] h-10 w-[4px] border-l border-[#666]"></span>
  </div>
</footer>
</div>

</body>
</html>
